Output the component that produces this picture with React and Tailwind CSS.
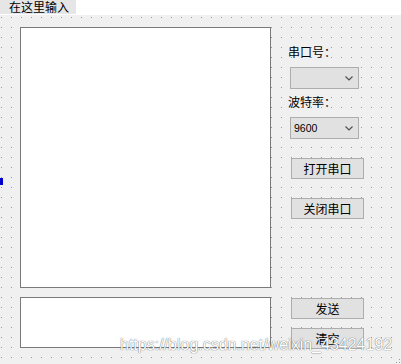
import React from "react";

const cjk = { fontFamily: '"Noto Sans CJK SC", "Noto Sans", sans-serif' };

function Combo({ value }) {
  return (
    <div className="ml-[2px] flex h-[22px] w-[69px] items-center justify-between border border-[#adadad] bg-[#e1e1e1] pl-[3px] pr-[5px]">
      <span className="text-[10.5px] leading-[12px] text-black" style={{ fontFamily: '"Liberation Sans", Arial, sans-serif' }}>
        {value}
      </span>
      <svg width="8" height="5" viewBox="0 0 8 5" className="mt-[1px]">
        <polyline points="0.5,0.5 4,4 7.5,0.5" fill="none" stroke="#505050" strokeWidth="1.2" />
      </svg>
    </div>
  );
}

function Btn({ label, className }) {
  return (
    <div className={"ml-[3px] flex h-[21px] w-[73px] items-center justify-center border border-[#adadad] bg-[#e1e1e1] text-[12px] leading-[12px] text-black " + className} style={cjk}>
      {label}
    </div>
  );
}

export default function App() {
  return (
    <div className="relative h-[364px] w-[401px] overflow-hidden bg-white" style={cjk}>
      <div className="flex h-[15px] w-full bg-white">
        <div className="flex h-[14px] w-[76px] items-center bg-[#e6e6e6] pl-[9px] text-[12px] leading-[12px] text-black">
          在这里输入
        </div>
      </div>
      <div className="flex h-[349px] w-full bg-[#f0f0f0] bg-[image:radial-gradient(circle_at_0.5px_0.5px,#9a9a9a_0.8px,transparent_0.8px)] bg-[length:10px_10px] bg-[position:1px_2px]">
        <div className="flex flex-col gap-[9px] pl-[20px] pt-[12px]">
          <div className="h-[261px] w-[251px] border border-[#7a7a7a] bg-white" />
          <div className="h-[51px] w-[251px] border border-[#7a7a7a] bg-white" />
        </div>
        <div className="ml-[17px] flex flex-col">
          <div className="mt-[31px] h-[12px] text-[12px] leading-[12px] text-black">串口号：</div>
          <div className="mt-[9px]">
            <Combo value="" />
          </div>
          <div className="mt-[7px] h-[12px] text-[12px] leading-[12px] text-black">波特率：</div>
          <div className="mt-[9px]">
            <Combo value="9600" />
          </div>
          <Btn label="打开串口" className="mt-[19px]" />
          <Btn label="关闭串口" className="mt-[19px]" />
          <Btn label="发送" className="mt-[79px]" />
          <Btn label="清空" className="mt-[9px]" />
        </div>
      </div>
      <div className="absolute left-0 top-[178px] h-[7px] w-[3px] border border-[#0000cc] bg-black" />
      <div
        className="absolute left-[120px] top-[337px] whitespace-nowrap text-[16px] leading-[16px] text-white [text-shadow:0_0_1px_rgba(0,0,0,0.55),0_0_1px_rgba(0,0,0,0.35)]"
        style={{ fontFamily: '"Liberation Sans", Arial, sans-serif' }}
      >
        https://blog.csdn.net/weixin_43424192
      </div>
      <div className="absolute left-[399px] top-[359px] h-[1px] w-[1px] bg-[#9a9a9a]" />
      <div className="absolute left-[396px] top-[362px] h-[1px] w-[1px] bg-[#9a9a9a]" />
      <div className="absolute left-[399px] top-[362px] h-[1px] w-[1px] bg-[#9a9a9a]" />
    </div>
  );
}
